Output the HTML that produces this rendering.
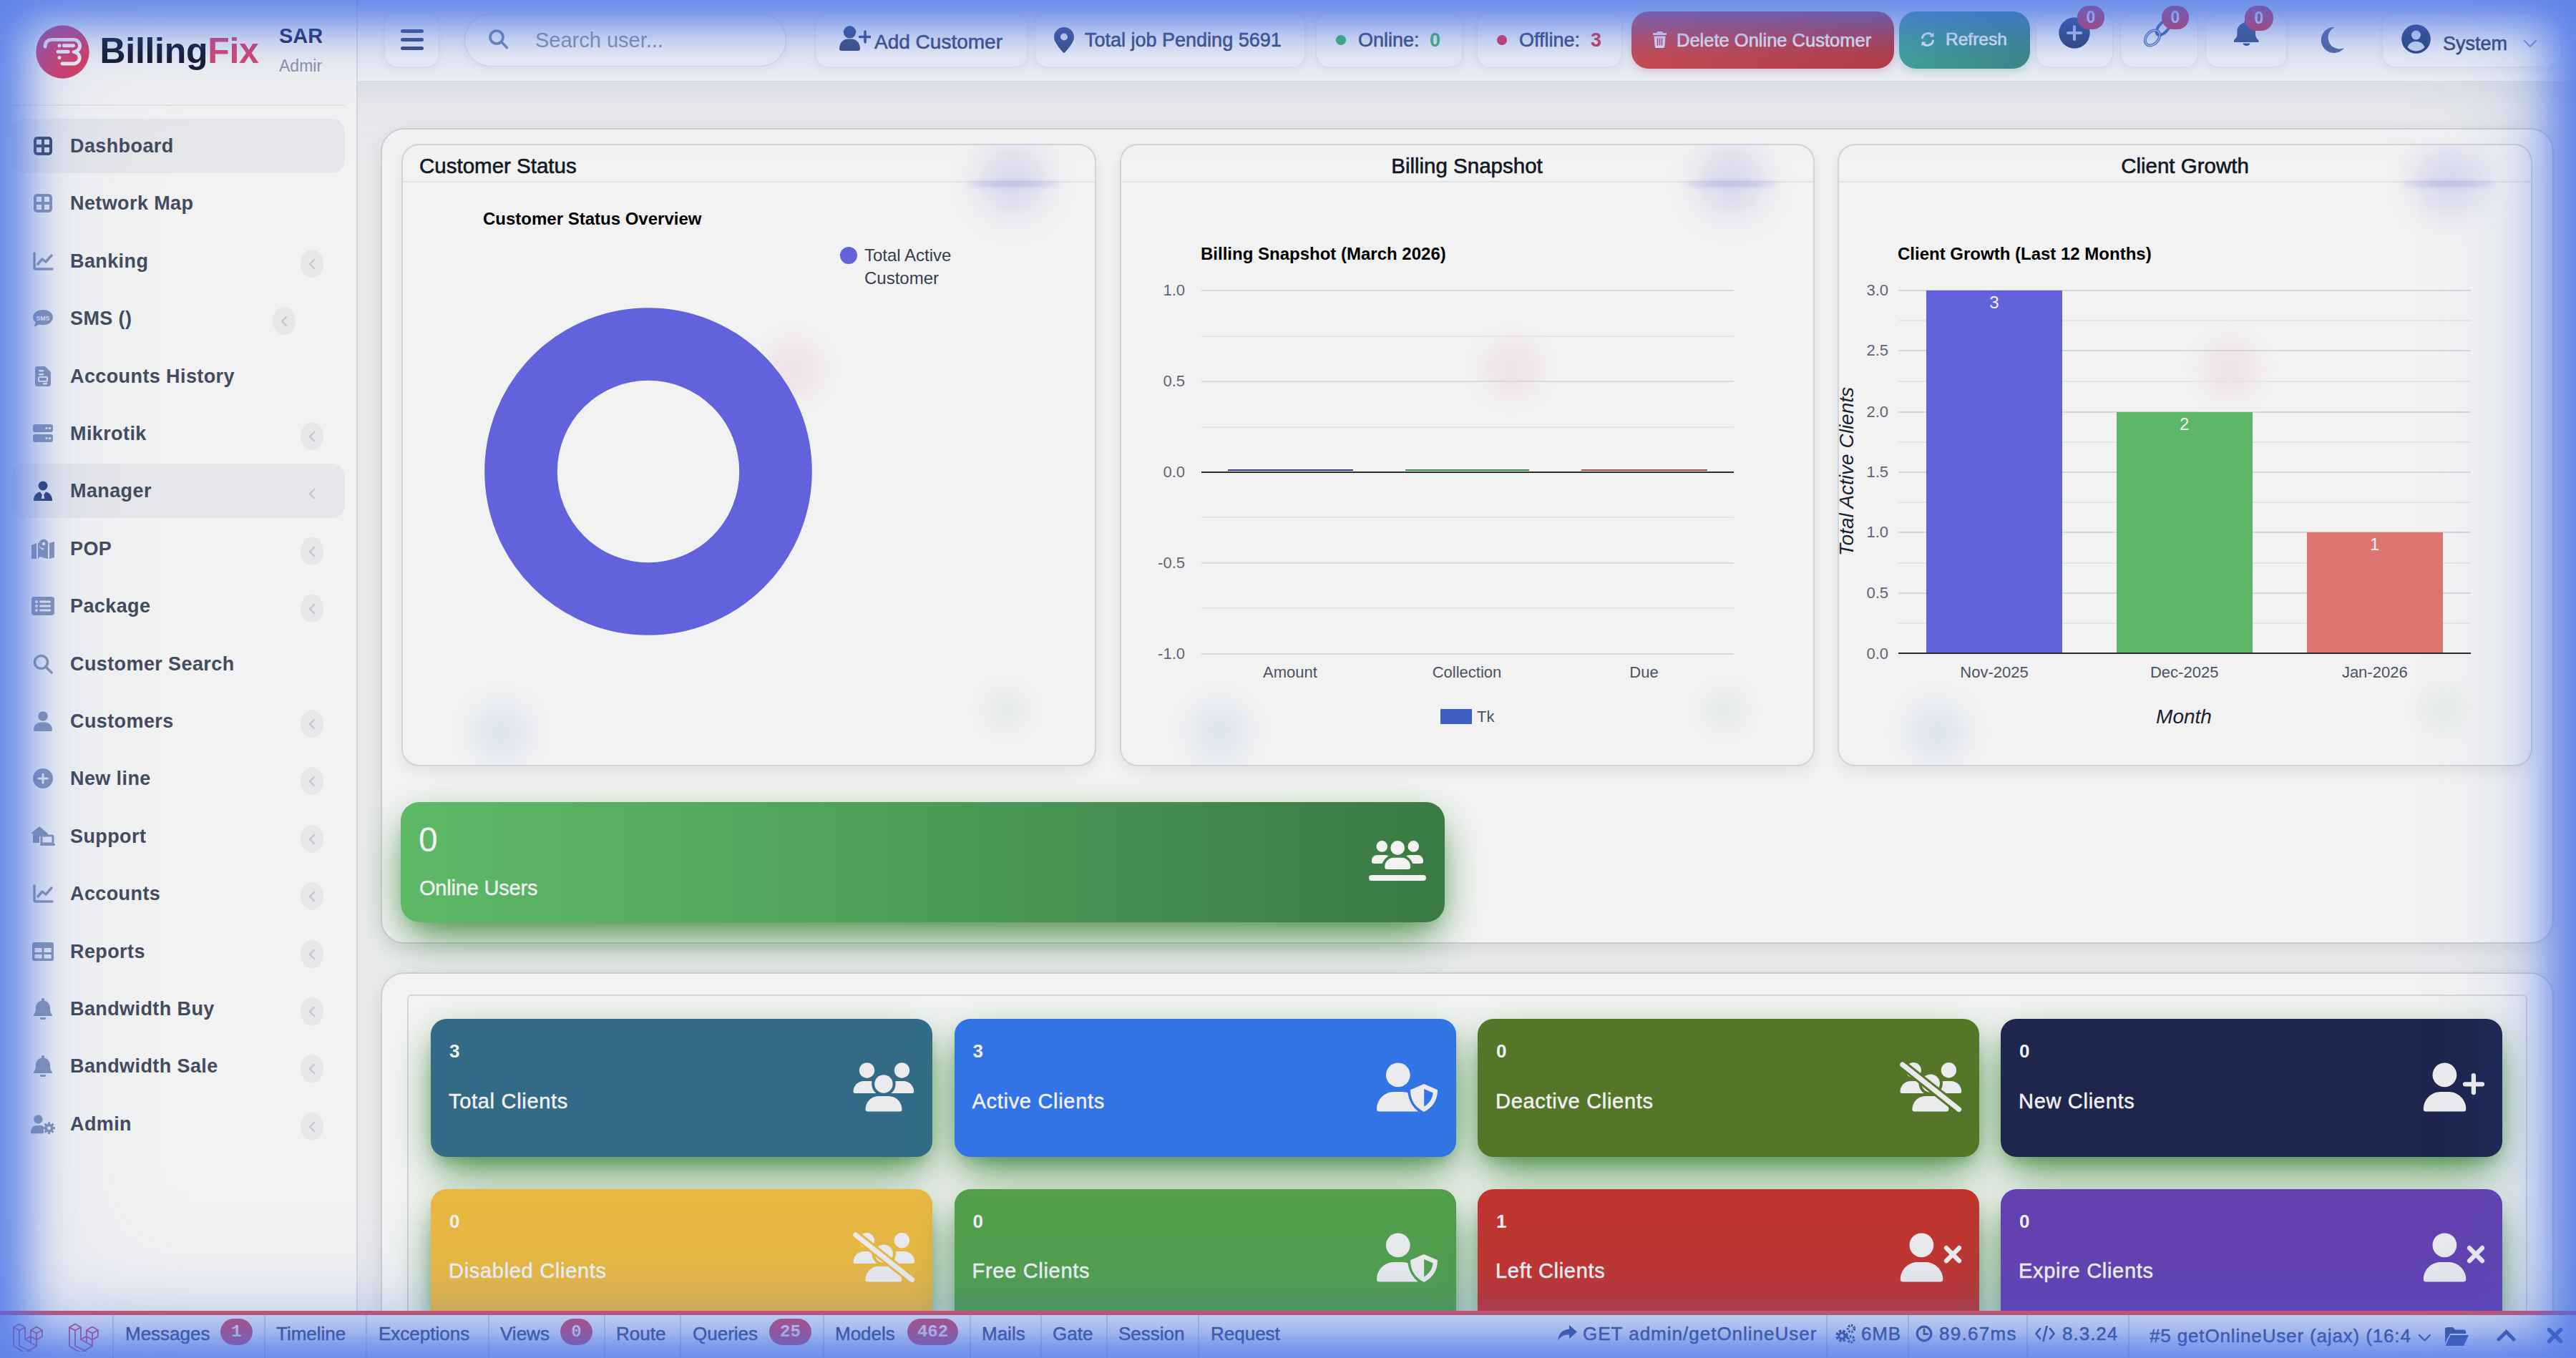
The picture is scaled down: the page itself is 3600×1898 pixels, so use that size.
<!DOCTYPE html>
<html><head><meta charset="utf-8">
<style>
*{box-sizing:border-box;margin:0;padding:0}
html,body{width:3600px;height:1898px;overflow:hidden;background:#e8e9eb;font-family:"Liberation Sans",sans-serif;position:relative}
.a{position:absolute;white-space:nowrap}
#sidebar{position:absolute;left:0;top:0;width:500px;height:1898px;background:#f2f2f2;border-right:2px solid #d6d9df;overflow:hidden}
#logo-sep{position:absolute;left:16px;top:146px;width:466px;height:2px;background:#e3e4e7}
.mi{position:absolute;left:16px;width:466px;height:76px;border-radius:18px}
.mi.act{background:#e6e7ea}
.mi .ic{position:absolute;left:27px;top:0;width:34px;height:76px;display:flex;align-items:center;justify-content:center}
.mi .tx{position:absolute;left:82px;top:0;line-height:76px;font-size:27px;font-weight:700;color:#434c5e;letter-spacing:0.4px;white-space:nowrap}
.mi .chev{position:absolute;top:22px;width:32px;height:39px;border-radius:50%;background:#e7e7e9}
.mi .chev.noc{background:transparent}
.mi .chev svg{position:absolute;left:10px;top:12px}
#topbar{position:absolute;left:500px;top:0;width:3100px;height:113px;background:#eff0f3;border-bottom:2px solid #f3f4f6}
#tshadow{position:absolute;left:500px;top:113px;width:3100px;height:40px;background:linear-gradient(#dfe0e4,rgba(232,233,235,0))}
.tb{position:absolute;top:17px;height:77px;border-radius:18px;background:rgba(255,255,255,0.16);border:1.5px solid rgba(190,198,222,0.35);box-shadow:0 4px 10px rgba(40,60,120,0.06)}
.tt{position:absolute;white-space:nowrap;color:#3f4d7c;font-size:27px;line-height:40px;height:40px;-webkit-text-stroke:0.6px currentColor}
.card-outer{position:absolute;border:2px solid #cacdd4;border-radius:33px;background:#f2f2f2;box-shadow:0 6px 26px rgba(0,0,0,0.08)}
.chart{position:absolute;top:201px;width:971px;height:870px;border:2px solid #d1d4db;border-radius:25px;background:#f2f2f2;overflow:hidden;box-shadow:0 8px 22px rgba(0,0,0,0.07)}
.chart .hd{position:absolute;left:0;top:50px;width:100%;height:2px;background:#e1e2e6}
.chart .ttl{position:absolute;top:0;height:50px;line-height:44px;font-size:29.5px;color:#111827;white-space:nowrap;-webkit-text-stroke:0.6px currentColor}
.blob{position:absolute;border-radius:50%;filter:blur(14px)}
.ct{position:absolute;white-space:nowrap;font-size:24px;font-weight:700;color:#000;line-height:30px;height:30px}
.ax{position:absolute;white-space:nowrap;font-size:23px;color:#4b5263;line-height:30px;height:30px}
.gl{position:absolute;height:2px;background:#dcdde1}
.stat{position:absolute;width:701px;height:193px;border-radius:22px;box-shadow:0 24px 60px -10px rgba(60,135,60,1),0 12px 20px -8px rgba(60,130,60,0.4)}
.stat .n{position:absolute;left:26px;top:30px;font-size:26px;line-height:30px;font-weight:700;color:#f1f1f3}
.stat .l{position:absolute;left:25px;top:94.5px;font-size:29px;line-height:40px;color:#f1f1f3;white-space:nowrap;letter-spacing:0.7px;-webkit-text-stroke:0.5px currentColor}
.stat svg{position:absolute}
#debugbar{position:absolute;left:0;top:1832px;width:3600px;height:66px;background:#f1f2f5;border-top:6px solid #d9505f}
.db{position:absolute;top:0;line-height:60px;font-size:26px;color:#3e4a7a;white-space:nowrap;-webkit-text-stroke:0.5px currentColor}
.dsep{position:absolute;top:0;width:2px;height:60px;background:rgba(160,175,215,0.45)}
.badge{position:absolute;top:5px;height:37px;border-radius:19px;background:#cf4a66;color:#f4e3ec;font-size:24px;font-weight:700;line-height:37px;text-align:center}
.vg{position:absolute;pointer-events:none}
</style></head>
<body>
<div class="card-outer" style="left:532px;top:179px;width:3037px;height:1140px"></div>
<div class="chart" style="left:561px"><div class="hd"></div><div class="ttl" style="top:6.5px;left:23px">Customer Status</div><div class="blob" style="left:804px;top:2px;width:96px;height:96px;filter:blur(20px);background:rgba(130,130,225,0.22)"></div><div class="blob" style="left:787px;top:52px;width:130px;height:5px;filter:blur(3px);background:rgba(120,120,225,0.4)"></div><div class="blob" style="left:506px;top:272px;width:80px;height:80px;background:rgba(230,160,190,0.18)"></div><div class="blob" style="left:97px;top:780px;width:80px;height:80px;filter:blur(18px);background:rgba(170,195,230,0.28)"></div><div class="blob" style="left:813px;top:758px;width:60px;height:60px;background:rgba(185,210,190,0.2)"></div></div>
<div class="chart" style="left:1564.5px"><div class="hd"></div><div class="ttl" style="top:6.5px;left:0;width:100%;text-align:center">Billing Snapshot</div><div class="blob" style="left:804px;top:2px;width:96px;height:96px;filter:blur(20px);background:rgba(130,130,225,0.22)"></div><div class="blob" style="left:787px;top:52px;width:130px;height:5px;filter:blur(3px);background:rgba(120,120,225,0.4)"></div><div class="blob" style="left:506px;top:272px;width:80px;height:80px;background:rgba(230,160,190,0.18)"></div><div class="blob" style="left:97px;top:780px;width:80px;height:80px;filter:blur(18px);background:rgba(170,195,230,0.28)"></div><div class="blob" style="left:813px;top:758px;width:60px;height:60px;background:rgba(185,210,190,0.2)"></div></div>
<div class="chart" style="left:2568px"><div class="hd"></div><div class="ttl" style="top:6.5px;left:0;width:100%;text-align:center">Client Growth</div><div class="blob" style="left:804px;top:2px;width:96px;height:96px;filter:blur(20px);background:rgba(130,130,225,0.22)"></div><div class="blob" style="left:787px;top:52px;width:130px;height:5px;filter:blur(3px);background:rgba(120,120,225,0.4)"></div><div class="blob" style="left:506px;top:272px;width:80px;height:80px;background:rgba(230,160,190,0.18)"></div><div class="blob" style="left:97px;top:780px;width:80px;height:80px;filter:blur(18px);background:rgba(170,195,230,0.28)"></div><div class="blob" style="left:813px;top:758px;width:60px;height:60px;background:rgba(185,210,190,0.2)"></div></div>
<div class="ct" style="left:675px;top:290.5px">Customer Status Overview</div>
<svg class="a" style="left:670px;top:423px" width="472" height="472" viewBox="0 0 472 472"><circle cx="236" cy="236" r="178" fill="none" stroke="#6262dc" stroke-width="101.6"/></svg>
<div class="a" style="left:1174px;top:344.5px;width:24px;height:24px;border-radius:50%;background:#6262dc"></div>
<div class="a" style="left:1208px;top:342px;font-size:24px;line-height:30px;color:#373d4f">Total Active</div>
<div class="a" style="left:1208px;top:373.5px;font-size:24px;line-height:30px;color:#373d4f">Customer</div>
<div class="ct" style="left:1678px;top:339.5px">Billing Snapshot (March 2026)</div>
<div class="gl" style="left:1679px;top:405px;width:744px;background:#d9dadf"></div>
<div class="ax" style="left:1556px;width:100px;text-align:right;top:391px;font-size:22px;color:#5f6575">1.0</div>
<div class="gl" style="left:1679px;top:468.5px;width:744px;background:#e3e4e7"></div>
<div class="gl" style="left:1679px;top:532px;width:744px;background:#d9dadf"></div>
<div class="ax" style="left:1556px;width:100px;text-align:right;top:518px;font-size:22px;color:#5f6575">0.5</div>
<div class="gl" style="left:1679px;top:595.5px;width:744px;background:#e3e4e7"></div>
<div class="a" style="left:1679px;top:658.5px;width:744px;height:2px;background:#2b2b2b"></div>
<div class="ax" style="left:1556px;width:100px;text-align:right;top:644.5px;font-size:22px;color:#5f6575">0.0</div>
<div class="gl" style="left:1679px;top:722px;width:744px;background:#e3e4e7"></div>
<div class="gl" style="left:1679px;top:785.5px;width:744px;background:#d9dadf"></div>
<div class="ax" style="left:1556px;width:100px;text-align:right;top:771.5px;font-size:22px;color:#5f6575">-0.5</div>
<div class="gl" style="left:1679px;top:849px;width:744px;background:#e3e4e7"></div>
<div class="gl" style="left:1679px;top:912.5px;width:744px;background:#d9dadf"></div>
<div class="ax" style="left:1556px;width:100px;text-align:right;top:898.5px;font-size:22px;color:#5f6575">-1.0</div>
<div class="a" style="left:1716px;top:656px;width:175px;height:2px;background:#343a8a"></div>
<div class="a" style="left:1964px;top:656px;width:173px;height:2px;background:#3d8a4a"></div>
<div class="a" style="left:2210px;top:656px;width:176px;height:2px;background:#a34f4f"></div>
<div class="ax" style="left:1703px;width:200px;text-align:center;top:925px;font-size:22px">Amount</div>
<div class="ax" style="left:1950px;width:200px;text-align:center;top:925px;font-size:22px">Collection</div>
<div class="ax" style="left:2197.5px;width:200px;text-align:center;top:925px;font-size:22px">Due</div>
<div class="a" style="left:2013px;top:991px;width:44px;height:21px;background:#3e5fc0"></div>
<div class="ax" style="left:2064px;top:987px;font-size:22px">Tk</div>
<div class="ct" style="left:2652px;top:339.5px">Client Growth (Last 12 Months)</div>
<div class="gl" style="left:2653px;top:405px;width:800px;background:#d6d7dd"></div>
<div class="ax" style="left:2539px;width:100px;text-align:right;top:391px;font-size:22px;color:#5f6575">3.0</div>
<div class="gl" style="left:2653px;top:447.2px;width:800px;background:#e3e4e7"></div>
<div class="gl" style="left:2653px;top:489.4px;width:800px;background:#d6d7dd"></div>
<div class="ax" style="left:2539px;width:100px;text-align:right;top:475.4px;font-size:22px;color:#5f6575">2.5</div>
<div class="gl" style="left:2653px;top:531.6px;width:800px;background:#e3e4e7"></div>
<div class="gl" style="left:2653px;top:574.6px;width:800px;background:#d6d7dd"></div>
<div class="ax" style="left:2539px;width:100px;text-align:right;top:560.6px;font-size:22px;color:#5f6575">2.0</div>
<div class="gl" style="left:2653px;top:616.8px;width:800px;background:#e3e4e7"></div>
<div class="gl" style="left:2653px;top:659px;width:800px;background:#d6d7dd"></div>
<div class="ax" style="left:2539px;width:100px;text-align:right;top:645px;font-size:22px;color:#5f6575">1.5</div>
<div class="gl" style="left:2653px;top:701px;width:800px;background:#e3e4e7"></div>
<div class="gl" style="left:2653px;top:743px;width:800px;background:#d6d7dd"></div>
<div class="ax" style="left:2539px;width:100px;text-align:right;top:729px;font-size:22px;color:#5f6575">1.0</div>
<div class="gl" style="left:2653px;top:785.5px;width:800px;background:#e3e4e7"></div>
<div class="gl" style="left:2653px;top:828px;width:800px;background:#d6d7dd"></div>
<div class="ax" style="left:2539px;width:100px;text-align:right;top:814px;font-size:22px;color:#5f6575">0.5</div>
<div class="gl" style="left:2653px;top:870.3px;width:800px;background:#e3e4e7"></div>
<div class="ax" style="left:2539px;width:100px;text-align:right;top:898.5px;font-size:22px;color:#5f6575">0.0</div>
<div class="a" style="left:2692px;top:406px;width:190px;height:507.5px;background:#6262dc"></div>
<div class="ax" style="left:2692px;width:190px;text-align:center;top:408px;font-size:24px;color:#f4f4f6">3</div>
<div class="ax" style="left:2687.0px;width:200px;text-align:center;top:925px;font-size:22px">Nov-2025</div>
<div class="a" style="left:2957.6px;top:575.6px;width:190.2px;height:337.9px;background:#5cb769"></div>
<div class="ax" style="left:2957.6px;width:190.2px;text-align:center;top:577.6px;font-size:24px;color:#f4f4f6">2</div>
<div class="ax" style="left:2952.7px;width:200px;text-align:center;top:925px;font-size:22px">Dec-2025</div>
<div class="a" style="left:3224px;top:744px;width:189.5px;height:169.5px;background:#df7570"></div>
<div class="ax" style="left:3224px;width:189.5px;text-align:center;top:746px;font-size:24px;color:#f4f4f6">1</div>
<div class="ax" style="left:3218.75px;width:200px;text-align:center;top:925px;font-size:22px">Jan-2026</div>
<div class="a" style="left:2653px;top:912px;width:800px;height:2px;background:#2b2b2b"></div>
<div class="a" style="left:2952px;top:985px;width:200px;text-align:center;font-size:28px;line-height:34px;font-style:italic;color:#1c2030">Month</div>
<div class="a" style="left:2481px;top:660px;width:200px;height:34px;text-align:center;font-size:28px;line-height:34px;font-style:italic;color:#1c2030;transform:rotate(-90deg);overflow:visible;white-space:nowrap"><span style="position:relative;left:0">Total Active Clients</span></div>
<div class="a" style="left:560px;top:1121px;width:1459px;height:168px;border-radius:26px;background:linear-gradient(90deg,#5db968 0%,#55a95f 30%,#4a9554 60%,#3a7a44 100%);box-shadow:0 24px 60px -10px rgba(60,135,60,1),0 12px 20px -8px rgba(60,130,60,0.15)"></div>
<div class="a" style="left:585px;top:1144px;font-size:48px;line-height:60px;color:#f1f2f1">0</div>
<div class="a" style="left:586px;top:1220.5px;font-size:29px;line-height:40px;color:#f1f2f1;letter-spacing:-0.2px;-webkit-text-stroke:0.4px currentColor">Online Users</div>
<svg class="a" style="left:1900px;top:1160px" width="110" height="85" viewBox="0 0 110 85"><g fill="#f2f2f2"><circle cx="31.3" cy="22.9" r="7.8"/><circle cx="75.3" cy="22.9" r="7.8"/><path d="M16.9 43c0-4.5 3.5-8 8-8h11c4.5 0 8 3.5 8 8v1a3 3 0 0 1-3 3H19.9a3 3 0 0 1-3-3z"/><path d="M62 43c0-4.5 3.5-8 8-8h11c4.5 0 8 3.5 8 8v1a3 3 0 0 1-3 3H65a3 3 0 0 1-3-3z"/></g><path d="M33 55c0-10 8-18.5 18-18.5h4c10 0 18 8.5 18 18.5" fill="none" stroke="#3f8048" stroke-width="6"/><g fill="#f2f2f2"><circle cx="53.2" cy="25" r="9.9"/><path d="M35.2 51.5c0-7 5.5-12.7 12.5-12.7h11c7 0 12.5 5.7 12.5 12.7a3.6 3.6 0 0 1-3.6 3.6H38.8a3.6 3.6 0 0 1-3.6-3.6z"/><rect x="13" y="63" width="80" height="8" rx="4"/></g></svg>
<div class="card-outer" style="left:532px;top:1359px;width:3037px;height:700px"></div>
<div class="a" style="left:569px;top:1390px;width:2963px;height:700px;border:2px solid #d3d5da;border-radius:6px;background:#f2f2f2"></div>
<div class="stat" style="left:602px;top:1424px;background:#336b87"><div class="n">3</div><div class="l">Total Clients</div><svg style="left:588px;top:56px" width="100" height="90" viewBox="10 10 100 90"><g fill="#ebebed"><circle cx="31.5" cy="26" r="10.7"/><circle cx="80.5" cy="26" r="10.7"/><path d="M12.5 55.5c0-8 6.5-14.6 14.6-14.6h9c8 0 14.6 6.5 14.6 14.6v0a2.5 2.5 0 0 1-2.5 2.5H15a2.5 2.5 0 0 1-2.5-2.5z"/><path d="M59 55.5c0-8 6.5-14.6 14.6-14.6h9c8 0 14.6 6.5 14.6 14.6a2.5 2.5 0 0 1-2.5 2.5H61.5a2.5 2.5 0 0 1-2.5-2.5z"/></g><circle cx="54.9" cy="45" r="16.7" fill="#336b87"/><g fill="#ebebed"><circle cx="54.9" cy="45" r="12.7"/><path d="M29.5 80.5c0-10 8-18.5 18-18.5h14.5c10 0 18.5 8.5 18.5 18.5a3 3 0 0 1-3 3H32.5a3 3 0 0 1-3-3z"/></g></svg></div>
<div class="stat" style="left:1333.5px;top:1424px;background:#3274e6"><div class="n">3</div><div class="l">Active Clients</div><svg style="left:566px;top:46px" width="120" height="100" viewBox="0 0 120 100"><g fill="#ebebed"><circle cx="53.8" cy="32.4" r="16.9"/><path d="M24 80c0-13 10.5-24 24-24h12c13 0 24 11 24 24a3.6 3.6 0 0 1-3.6 3.6H27.6A3.6 3.6 0 0 1 24 80z"/></g><path d="M90 40.5L113 50.5C113 68 105 81 90 88.5 75 81 67 68 67 50.5z" fill="#3274e6"/><path d="M90 45L109 53.2C109 68 102 78 90 84 78 78 71 68 71 53.2z" fill="#ebebed"/><path d="M90.2 52L102.6 57.3C101.8 66 97.5 72 90.2 76.6z" fill="#3274e6"/></svg></div>
<div class="stat" style="left:2065px;top:1424px;background:#557628"><div class="n">0</div><div class="l">Deactive Clients</div><svg style="left:575px;top:46px" width="120" height="100" viewBox="0 0 120 100"><g fill="#ebebed"><circle cx="34.2" cy="25.8" r="10.7"/><circle cx="83.4" cy="25.8" r="10.7"/><path d="M15.5 55.5c0-8 6.5-14.6 14.6-14.6h9c8 0 14.6 6.5 14.6 14.6a2.5 2.5 0 0 1-2.5 2.5H18a2.5 2.5 0 0 1-2.5-2.5z"/><path d="M63 55.5c0-8 6.5-14.6 14.6-14.6h9c8 0 14.6 6.5 14.6 14.6a2.5 2.5 0 0 1-2.5 2.5H65.5a2.5 2.5 0 0 1-2.5-2.5z"/></g><circle cx="58.2" cy="44.2" r="16.7" fill="#557628"/><g fill="#ebebed"><circle cx="58.2" cy="44.2" r="12.7"/><path d="M32.4 80.5c0-10 8-18.5 18-18.5h14.5c10 0 18.5 8.5 18.5 18.5a3 3 0 0 1-3 3H35.4a3 3 0 0 1-3-3z"/></g><path d="M18.8 18L97.6 80.6" stroke="#557628" stroke-width="13" stroke-linecap="round"/><path d="M18.8 18L97.6 80.6" stroke="#ebebed" stroke-width="7" stroke-linecap="round"/></svg></div>
<div class="stat" style="left:2796px;top:1424px;background:#1e264d"><div class="n">0</div><div class="l">New Clients</div><svg style="left:574px;top:46px" width="110" height="100" viewBox="0 0 110 100"><g fill="#ebebed"><circle cx="46.4" cy="32.4" r="16.9"/><path d="M16.8 80c0-13 10.5-24 24-24h11.5c13 0 24 11 24 24a3.6 3.6 0 0 1-3.6 3.6H20.4a3.6 3.6 0 0 1-3.6-3.6z"/></g><path d="M86.9 33.2v23.8M75 45.3h24" stroke="#ebebed" stroke-width="6.3" stroke-linecap="round"/></svg></div>
<div class="stat" style="left:602px;top:1661.6px;background:#e8b842"><div class="n">0</div><div class="l">Disabled Clients</div><svg style="left:575px;top:46px" width="120" height="100" viewBox="0 0 120 100"><g fill="#ebebed"><circle cx="34.2" cy="25.8" r="10.7"/><circle cx="83.4" cy="25.8" r="10.7"/><path d="M15.5 55.5c0-8 6.5-14.6 14.6-14.6h9c8 0 14.6 6.5 14.6 14.6a2.5 2.5 0 0 1-2.5 2.5H18a2.5 2.5 0 0 1-2.5-2.5z"/><path d="M63 55.5c0-8 6.5-14.6 14.6-14.6h9c8 0 14.6 6.5 14.6 14.6a2.5 2.5 0 0 1-2.5 2.5H65.5a2.5 2.5 0 0 1-2.5-2.5z"/></g><circle cx="58.2" cy="44.2" r="16.7" fill="#e8b842"/><g fill="#ebebed"><circle cx="58.2" cy="44.2" r="12.7"/><path d="M32.4 80.5c0-10 8-18.5 18-18.5h14.5c10 0 18.5 8.5 18.5 18.5a3 3 0 0 1-3 3H35.4a3 3 0 0 1-3-3z"/></g><path d="M18.8 18L97.6 80.6" stroke="#e8b842" stroke-width="13" stroke-linecap="round"/><path d="M18.8 18L97.6 80.6" stroke="#ebebed" stroke-width="7" stroke-linecap="round"/></svg></div>
<div class="stat" style="left:1333.5px;top:1661.6px;background:#52a04c"><div class="n">0</div><div class="l">Free Clients</div><svg style="left:566px;top:46px" width="120" height="100" viewBox="0 0 120 100"><g fill="#ebebed"><circle cx="53.8" cy="32.4" r="16.9"/><path d="M24 80c0-13 10.5-24 24-24h12c13 0 24 11 24 24a3.6 3.6 0 0 1-3.6 3.6H27.6A3.6 3.6 0 0 1 24 80z"/></g><path d="M90 40.5L113 50.5C113 68 105 81 90 88.5 75 81 67 68 67 50.5z" fill="#52a04c"/><path d="M90 45L109 53.2C109 68 102 78 90 84 78 78 71 68 71 53.2z" fill="#ebebed"/><path d="M90.2 52L102.6 57.3C101.8 66 97.5 72 90.2 76.6z" fill="#52a04c"/></svg></div>
<div class="stat" style="left:2065px;top:1661.6px;background:#c0352f"><div class="n">1</div><div class="l">Left Clients</div><svg style="left:574px;top:48px" width="110" height="100" viewBox="0 0 110 100"><g fill="#ebebed"><circle cx="46.4" cy="30.3" r="16.9"/><path d="M16.8 78c0-13 10.5-24 24-24h11.5c13 0 24 11 24 24a3.6 3.6 0 0 1-3.6 3.6H20.4a3.6 3.6 0 0 1-3.6-3.6z"/></g><path d="M81 34.2L99 52.3M99 34.2L81 52.3" stroke="#ebebed" stroke-width="6.3" stroke-linecap="round"/></svg></div>
<div class="stat" style="left:2796px;top:1661.6px;background:#6441b0"><div class="n">0</div><div class="l">Expire Clients</div><svg style="left:574px;top:48px" width="110" height="100" viewBox="0 0 110 100"><g fill="#ebebed"><circle cx="46.4" cy="30.3" r="16.9"/><path d="M16.8 78c0-13 10.5-24 24-24h11.5c13 0 24 11 24 24a3.6 3.6 0 0 1-3.6 3.6H20.4a3.6 3.6 0 0 1-3.6-3.6z"/></g><path d="M81 34.2L99 52.3M99 34.2L81 52.3" stroke="#ebebed" stroke-width="6.3" stroke-linecap="round"/></svg></div>

<div id="sidebar">
<svg class="a" style="left:50px;top:35px" width="75" height="75" viewBox="0 0 75 75"><defs><linearGradient id="lg" x1="0" y1="0" x2="1" y2="1"><stop offset="0" stop-color="#c4457c"/><stop offset="1" stop-color="#e23a58"/></linearGradient></defs><circle cx="37.5" cy="37.5" r="37.2" fill="url(#lg)"/><path d="M13.1 30.2C13.1 24 16.5 20.4 23 20.4H53A8.6 8.6 0 0 1 53 37.6A8.2 8.2 0 0 1 53 54H36.9" fill="none" stroke="#f5f0f4" stroke-width="4.9" stroke-linecap="round" stroke-linejoin="round"/><path d="M39.3 28.8H52.6M31 37.2H45.3" stroke="#f5f0f4" stroke-width="4.9" stroke-linecap="round"/><circle cx="33" cy="28.8" r="2.5" fill="#f5f0f4"/><circle cx="33" cy="45.6" r="2.5" fill="#f5f0f4"/></svg>
<div class="a" style="left:139.5px;top:41.4px;font-size:50px;line-height:60px;font-weight:700;letter-spacing:-0.3px;color:#151a2e">Billing<span style="color:#d8456d">Fix</span></div>
<div class="a" style="left:390px;top:30px;width:60px;overflow:hidden;font-size:29px;line-height:40px;font-weight:700;color:#1f2d5c">SARKER</div>
<div class="a" style="left:390px;top:77px;width:60px;overflow:hidden;font-size:23px;line-height:30px;color:#8c95a6">Admin</div>

  <div id="logo-sep"></div>
<div class="mi act" style="top:166.0px"><div class="ic"><svg width="26" height="26" viewBox="0 0 26 26"><rect x="2" y="2" width="22" height="22" rx="3" fill="none" stroke="#3f4b67" stroke-width="4"/><path d="M13 2V24M2 13H24" stroke="#3f4b67" stroke-width="4"/></svg></div><div class="tx">Dashboard</div></div>
<div class="mi " style="top:246.4px"><div class="ic"><svg width="26" height="26" viewBox="0 0 26 26"><rect x="2" y="2" width="22" height="22" rx="3" fill="none" stroke="#8a95b0" stroke-width="4"/><path d="M13 2V24M2 13H24" stroke="#8a95b0" stroke-width="4"/></svg></div><div class="tx">Network Map</div></div>
<div class="mi " style="top:326.8px"><div class="ic"><svg width="30" height="26" viewBox="0 0 30 26"><path d="M3 2V22a2 2 0 0 0 2 2H28" fill="none" stroke="#8a95b0" stroke-width="3.5" stroke-linecap="round"/><path d="M8 17L14 10L19 14L27 5" fill="none" stroke="#8a95b0" stroke-width="3.5" stroke-linecap="round" stroke-linejoin="round"/></svg></div><div class="tx">Banking</div><div class="chev" style="left:404px"><svg width="12" height="16" viewBox="0 0 12 16"><path d="M9 2L3 8l6 6" fill="none" stroke="#c3c6cd" stroke-width="2.2" stroke-linecap="round" stroke-linejoin="round"/></svg></div></div>
<div class="mi " style="top:407.2px"><div class="ic"><svg width="30" height="26" viewBox="0 0 30 26"><path d="M15 1C7 1 1 5.8 1 11.5c0 2.8 1.4 5.2 3.6 7.1L2.5 25 9.5 21.5c1.7.5 3.5.8 5.5.8 8 0 14-4.8 14-10.8S23 1 15 1z" fill="#8a95b0"/><text x="15" y="15.5" font-size="8.5" font-weight="700" text-anchor="middle" fill="#f2f2f2" font-family="Liberation Sans">SMS</text></svg></div><div class="tx">SMS ()</div><div class="chev" style="left:365px"><svg width="12" height="16" viewBox="0 0 12 16"><path d="M9 2L3 8l6 6" fill="none" stroke="#c3c6cd" stroke-width="2.2" stroke-linecap="round" stroke-linejoin="round"/></svg></div></div>
<div class="mi " style="top:487.6px"><div class="ic"><svg width="22" height="28" viewBox="0 0 22 28"><path d="M3 0h11l8 8v17a3 3 0 0 1-3 3H3a3 3 0 0 1-3-3V3a3 3 0 0 1 3-3z" fill="#8a95b0"/><rect x="5" y="5" width="7" height="2.5" rx="1" fill="#f2f2f2"/><rect x="5" y="10" width="7" height="2.5" rx="1" fill="#f2f2f2"/><rect x="5" y="15" width="12" height="6" rx="1.5" fill="none" stroke="#f2f2f2" stroke-width="2"/><rect x="11" y="23" width="6" height="2.5" rx="1" fill="#f2f2f2"/></svg></div><div class="tx">Accounts History</div></div>
<div class="mi " style="top:568.0px"><div class="ic"><svg width="28" height="26" viewBox="0 0 28 26"><rect x="0" y="0" width="28" height="11" rx="3" fill="#8a95b0"/><rect x="0" y="14" width="28" height="11" rx="3" fill="#8a95b0"/><circle cx="19" cy="5.5" r="1.6" fill="#f2f2f2"/><circle cx="23.5" cy="5.5" r="1.6" fill="#f2f2f2"/><circle cx="19" cy="19.5" r="1.6" fill="#f2f2f2"/><circle cx="23.5" cy="19.5" r="1.6" fill="#f2f2f2"/></svg></div><div class="tx">Mikrotik</div><div class="chev" style="left:404px"><svg width="12" height="16" viewBox="0 0 12 16"><path d="M9 2L3 8l6 6" fill="none" stroke="#c3c6cd" stroke-width="2.2" stroke-linecap="round" stroke-linejoin="round"/></svg></div></div>
<div class="mi act" style="top:648.4px"><div class="ic"><svg width="26" height="28" viewBox="0 0 26 28"><circle cx="13" cy="7" r="6.5" fill="#2f3f72"/><path d="M0 27c0-6 4-11 9-11.5L13 21l4-5.5c5 .5 9 5.5 9 11.5v1H0z" fill="#2f3f72"/><path d="M11.5 16h3l-0.5 2 1.3 7h-4.6l1.3-7z" fill="#e7e8eb"/></svg></div><div class="tx">Manager</div><div class="chev noc" style="left:404px"><svg width="12" height="16" viewBox="0 0 12 16"><path d="M9 2L3 8l6 6" fill="none" stroke="#c3c6cd" stroke-width="2.2" stroke-linecap="round" stroke-linejoin="round"/></svg></div></div>
<div class="mi " style="top:728.8px"><div class="ic"><svg width="32" height="28" viewBox="0 0 32 28"><path d="M0 9l7-3v22l-7 0zM25 6l7-2v22l-7 2z" fill="#8a95b0"/><path d="M9 6l2 0v20l-2 2zM16 14l-5 0 0 0M23 8v20l-12-3V12l5 4z" fill="#8a95b0"/><circle cx="17" cy="7" r="6.5" fill="#8a95b0"/><circle cx="17" cy="7" r="2.3" fill="#f2f2f2"/></svg></div><div class="tx">POP</div><div class="chev" style="left:404px"><svg width="12" height="16" viewBox="0 0 12 16"><path d="M9 2L3 8l6 6" fill="none" stroke="#c3c6cd" stroke-width="2.2" stroke-linecap="round" stroke-linejoin="round"/></svg></div></div>
<div class="mi " style="top:809.2px"><div class="ic"><svg width="32" height="26" viewBox="0 0 32 26"><rect x="0" y="0" width="32" height="26" rx="4" fill="#8a95b0"/><circle cx="7" cy="7" r="2" fill="#f2f2f2"/><circle cx="7" cy="13" r="2" fill="#f2f2f2"/><circle cx="7" cy="19" r="2" fill="#f2f2f2"/><rect x="11" y="5.5" width="16" height="3" rx="1.5" fill="#f2f2f2"/><rect x="11" y="11.5" width="16" height="3" rx="1.5" fill="#f2f2f2"/><rect x="11" y="17.5" width="16" height="3" rx="1.5" fill="#f2f2f2"/></svg></div><div class="tx">Package</div><div class="chev" style="left:404px"><svg width="12" height="16" viewBox="0 0 12 16"><path d="M9 2L3 8l6 6" fill="none" stroke="#c3c6cd" stroke-width="2.2" stroke-linecap="round" stroke-linejoin="round"/></svg></div></div>
<div class="mi " style="top:889.6px"><div class="ic"><svg width="28" height="28" viewBox="0 0 28 28"><circle cx="11.5" cy="11.5" r="9" fill="none" stroke="#8a95b0" stroke-width="3.5"/><path d="M18.5 18.5L26 26" stroke="#8a95b0" stroke-width="3.5" stroke-linecap="round"/></svg></div><div class="tx">Customer Search</div></div>
<div class="mi " style="top:970.0px"><div class="ic"><svg width="26" height="28" viewBox="0 0 26 28"><circle cx="13" cy="7" r="6.8" fill="#8a95b0"/><path d="M0 26c0-6 4.5-10.5 10-10.5h6c5.5 0 10 4.5 10 10.5a2 2 0 0 1-2 2H2a2 2 0 0 1-2-2z" fill="#8a95b0"/></svg></div><div class="tx">Customers</div><div class="chev" style="left:404px"><svg width="12" height="16" viewBox="0 0 12 16"><path d="M9 2L3 8l6 6" fill="none" stroke="#c3c6cd" stroke-width="2.2" stroke-linecap="round" stroke-linejoin="round"/></svg></div></div>
<div class="mi " style="top:1050.4px"><div class="ic"><svg width="28" height="28" viewBox="0 0 28 28"><circle cx="14" cy="14" r="14" fill="#8a95b0"/><path d="M14 8v12M8 14h12" stroke="#f2f2f2" stroke-width="3" stroke-linecap="round"/></svg></div><div class="tx">New line</div><div class="chev" style="left:404px"><svg width="12" height="16" viewBox="0 0 12 16"><path d="M9 2L3 8l6 6" fill="none" stroke="#c3c6cd" stroke-width="2.2" stroke-linecap="round" stroke-linejoin="round"/></svg></div></div>
<div class="mi " style="top:1130.8px"><div class="ic"><svg width="34" height="28" viewBox="0 0 34 28"><path d="M12 0L0 10h3v13h9V14h12V10z" fill="#8a95b0"/><rect x="15" y="13" width="16" height="11" rx="1.5" fill="none" stroke="#8a95b0" stroke-width="3"/><rect x="13" y="24" width="21" height="3" rx="1" fill="#8a95b0"/></svg></div><div class="tx">Support</div><div class="chev" style="left:404px"><svg width="12" height="16" viewBox="0 0 12 16"><path d="M9 2L3 8l6 6" fill="none" stroke="#c3c6cd" stroke-width="2.2" stroke-linecap="round" stroke-linejoin="round"/></svg></div></div>
<div class="mi " style="top:1211.2px"><div class="ic"><svg width="30" height="26" viewBox="0 0 30 26"><path d="M3 2V22a2 2 0 0 0 2 2H28" fill="none" stroke="#8a95b0" stroke-width="3.5" stroke-linecap="round"/><path d="M8 17L14 10L19 14L27 5" fill="none" stroke="#8a95b0" stroke-width="3.5" stroke-linecap="round" stroke-linejoin="round"/></svg></div><div class="tx">Accounts</div><div class="chev" style="left:404px"><svg width="12" height="16" viewBox="0 0 12 16"><path d="M9 2L3 8l6 6" fill="none" stroke="#c3c6cd" stroke-width="2.2" stroke-linecap="round" stroke-linejoin="round"/></svg></div></div>
<div class="mi " style="top:1291.6px"><div class="ic"><svg width="30" height="26" viewBox="0 0 30 26"><rect x="0" y="0" width="30" height="26" rx="3" fill="#8a95b0"/><rect x="3.5" y="8" width="10" height="6" fill="#f2f2f2"/><rect x="16.5" y="8" width="10" height="6" fill="#f2f2f2"/><rect x="3.5" y="17" width="10" height="5.5" fill="#f2f2f2"/><rect x="16.5" y="17" width="10" height="5.5" fill="#f2f2f2"/></svg></div><div class="tx">Reports</div><div class="chev" style="left:404px"><svg width="12" height="16" viewBox="0 0 12 16"><path d="M9 2L3 8l6 6" fill="none" stroke="#c3c6cd" stroke-width="2.2" stroke-linecap="round" stroke-linejoin="round"/></svg></div></div>
<div class="mi " style="top:1372.0px"><div class="ic"><svg width="26" height="30" viewBox="0 0 26 30"><path d="M13 0a2 2 0 0 1 2 2v1.5c4.5 1 8 5 8 10v2.5c0 3 1 5.5 3 7.5v1.5H0V23c2-2 3-4.5 3-7.5V13.5c0-5 3.5-9 8-10V2a2 2 0 0 1 2-2z" fill="#8a95b0"/><path d="M9 27h8a4 4 0 0 1-8 0z" fill="#8a95b0"/></svg></div><div class="tx">Bandwidth Buy</div><div class="chev" style="left:404px"><svg width="12" height="16" viewBox="0 0 12 16"><path d="M9 2L3 8l6 6" fill="none" stroke="#c3c6cd" stroke-width="2.2" stroke-linecap="round" stroke-linejoin="round"/></svg></div></div>
<div class="mi " style="top:1452.4px"><div class="ic"><svg width="26" height="30" viewBox="0 0 26 30"><path d="M13 0a2 2 0 0 1 2 2v1.5c4.5 1 8 5 8 10v2.5c0 3 1 5.5 3 7.5v1.5H0V23c2-2 3-4.5 3-7.5V13.5c0-5 3.5-9 8-10V2a2 2 0 0 1 2-2z" fill="#8a95b0"/><path d="M9 27h8a4 4 0 0 1-8 0z" fill="#8a95b0"/></svg></div><div class="tx">Bandwidth Sale</div><div class="chev" style="left:404px"><svg width="12" height="16" viewBox="0 0 12 16"><path d="M9 2L3 8l6 6" fill="none" stroke="#c3c6cd" stroke-width="2.2" stroke-linecap="round" stroke-linejoin="round"/></svg></div></div>
<div class="mi " style="top:1532.8px"><div class="ic"><svg width="36" height="28" viewBox="0 0 36 28"><circle cx="11" cy="7" r="6.5" fill="#8a95b0"/><path d="M0 26c0-6 4-10 9-10h5c2 0 3.5.5 5 1.5v10.5H2a2 2 0 0 1-2-2z" fill="#8a95b0"/><circle cx="27" cy="20" r="6.5" fill="#8a95b0"/><path d="M27 11v18M18 20h18M20.6 13.6l12.8 12.8M33.4 13.6L20.6 26.4" stroke="#8a95b0" stroke-width="3.2"/><circle cx="27" cy="20" r="2.6" fill="#f2f2f2"/></svg></div><div class="tx">Admin</div><div class="chev" style="left:404px"><svg width="12" height="16" viewBox="0 0 12 16"><path d="M9 2L3 8l6 6" fill="none" stroke="#c3c6cd" stroke-width="2.2" stroke-linecap="round" stroke-linejoin="round"/></svg></div></div>

</div>
<div id="topbar"></div>
<div id="tshadow"></div>
<div class="tb" style="left:537px;width:77px"></div>
<div class="a" style="left:560px;top:41px;width:32px;height:4.5px;border-radius:3px;background:#3e4d80"></div>
<div class="a" style="left:560px;top:53px;width:32px;height:4.5px;border-radius:3px;background:#3e4d80"></div>
<div class="a" style="left:560px;top:65px;width:32px;height:4.5px;border-radius:3px;background:#3e4d80"></div>
<div class="tb" style="left:649px;top:19px;width:450px;height:74px;border-radius:37px;border-color:rgba(170,182,220,0.45)"></div>
<svg class="a" style="left:682px;top:40px" width="30" height="30" viewBox="0 0 30 30"><circle cx="12" cy="12" r="9" fill="none" stroke="#7586b0" stroke-width="3.6"/><path d="M19 19l7.5 7.5" stroke="#7586b0" stroke-width="3.6" stroke-linecap="round"/></svg>
<div class="tt" style="left:748px;top:35.5px;font-size:29px;color:#8a92ac;-webkit-text-stroke:0">Search user...</div>
<div class="tb" style="left:1139px;top:18px;width:297px;height:76px"></div>
<svg class="a" style="left:1173px;top:36px" width="44" height="36" viewBox="0 0 44 36"><circle cx="14.5" cy="8.8" r="8.7" fill="#3e4f85"/><path d="M0 32c0-8 5.5-13.5 12-13.5h5c6.5 0 12 5.5 12 13.5a3 3 0 0 1-3 3H3a3 3 0 0 1-3-3z" fill="#3f4f7c"/><path d="M36 8v15M28.5 15.5h15" stroke="#3e4f85" stroke-width="3.6" stroke-linecap="round"/></svg>
<div class="tt" style="left:1222px;top:38.5px;font-size:28px">Add Customer</div>
<div class="tb" style="left:1446px;width:378px"></div>
<svg class="a" style="left:1473px;top:38px" width="28" height="36" viewBox="0 0 28 36"><path d="M14 0C6.3 0 0 6.2 0 13.8 0 22 10 32 12.5 35a2 2 0 0 0 3 0C18 32 28 22 28 13.8 28 6.2 21.7 0 14 0z" fill="#3f5083"/><circle cx="14" cy="13.5" r="5" fill="#e4e7f0"/></svg>
<div class="tt" style="left:1516px;top:36px">Total job Pending 5691</div>
<div class="tb" style="left:1839px;width:205px"></div>
<div class="a" style="left:1867px;top:48.5px;width:14px;height:14px;border-radius:50%;background:#3db866"></div>
<div class="tt" style="left:1898px;top:36px">Online:</div>
<div class="tt" style="left:1998px;top:36px;color:#3db866;font-weight:700;-webkit-text-stroke:0">0</div>
<div class="tb" style="left:2064px;width:203px"></div>
<div class="a" style="left:2092px;top:48.5px;width:14px;height:14px;border-radius:50%;background:#d83a55"></div>
<div class="tt" style="left:2123px;top:36px">Offline:</div>
<div class="tt" style="left:2223px;top:36px;color:#dc3545;font-weight:700;-webkit-text-stroke:0">3</div>
<div class="a" style="left:2280px;top:16px;width:367px;height:80px;border-radius:24px;background:linear-gradient(100deg,#cf4a4c,#bb3a3e);box-shadow:0 4px 12px rgba(200,50,70,0.2)"></div>
<svg class="a" style="left:2310px;top:44px" width="19" height="23" viewBox="0 0 19 23"><path d="M6 0h7l1 2h5v3H0V2h5z" fill="#f3e6ee"/><path d="M1.5 6.5h16l-1.2 14.5a2 2 0 0 1-2 2H4.7a2 2 0 0 1-2-2z" fill="#f3e6ee"/><path d="M6.5 9.5v10M9.5 9.5v10M12.5 9.5v10" stroke="#c84a60" stroke-width="1.6"/></svg>
<div class="tt" style="left:2343px;top:35.5px;font-size:25.5px;color:#f3ecf3">Delete Online Customer</div>
<div class="a" style="left:2654px;top:16px;width:183px;height:80px;border-radius:24px;background:linear-gradient(100deg,#46a497,#3a8983);box-shadow:0 4px 12px rgba(40,150,140,0.25)"></div>
<svg class="a" style="left:2683px;top:44px" width="22" height="22" viewBox="0 0 22 22"><path d="M3.5 9a8 8 0 0 1 14-3.5M18.5 13a8 8 0 0 1-14 3.5" fill="none" stroke="#e8f0f4" stroke-width="3" stroke-linecap="round"/><path d="M19.5 1.5v6h-6zM2.5 20.5v-6h6z" fill="#e8f0f4"/></svg>
<div class="tt" style="left:2719px;top:35px;font-size:24.5px;color:#eef3f6">Refresh</div>
<div class="tb" style="left:2845px;top:18px;width:108px;height:76px"></div>
<svg class="a" style="left:2877px;top:24px" width="44" height="44" viewBox="0 0 44 44"><circle cx="22" cy="22" r="21.7" fill="#2f4676"/><path d="M22 13v18M13 22h18" stroke="#b9c6ee" stroke-width="4.2" stroke-linecap="round"/></svg>
<div class="a" style="left:2903px;top:8px;width:38px;height:33px;border-radius:16px;background:#dc3545;color:#f0f0ff;font-size:23px;font-weight:700;line-height:33px;text-align:center">0</div>
<div class="tb" style="left:2963px;top:18px;width:109px;height:76px"></div>
<svg class="a" style="left:2994px;top:22px" width="46" height="46" viewBox="0 0 46 46"><ellipse cx="14" cy="31" rx="8.5" ry="12" transform="rotate(42 14 31)" fill="none" stroke="#5f7ab8" stroke-width="4"/><ellipse cx="29" cy="17" rx="6.5" ry="12" transform="rotate(42 29 17)" fill="none" stroke="#4d67a8" stroke-width="4"/><ellipse cx="14" cy="31" rx="8.5" ry="12" transform="rotate(42 14 31)" fill="none" stroke="#c9d6f5" stroke-width="1.2"/></svg>
<div class="a" style="left:3021px;top:8px;width:38px;height:33px;border-radius:16px;background:#dc3545;color:#f0f0ff;font-size:23px;font-weight:700;line-height:33px;text-align:center">0</div>
<div class="tb" style="left:3082px;top:18px;width:114px;height:76px"></div>
<svg class="a" style="left:3122px;top:27px" width="35" height="37" viewBox="0 0 35 37"><path d="M17.5 0c2 0 3 1.5 3 3v1.5c6 1.5 9.5 7 9.5 12.5v4c0 3 1.5 6 4.5 8.5v2.5H0V29c3-2.5 4.5-5.5 4.5-8.5v-4C4.5 11 8.5 6 14.5 4.5V3c0-1.5 1-3 3-3z" fill="#3e5389"/><path d="M12.5 33.5h10a5 3.5 0 0 1-10 0z" fill="#3e5389"/></svg>
<div class="a" style="left:3137px;top:8px;width:40px;height:35px;border-radius:17px;background:#dc3545;color:#f0f0ff;font-size:23px;font-weight:700;line-height:35px;text-align:center">0</div>
<svg class="a" style="left:3243px;top:37px" width="34" height="38" viewBox="0 0 34 38"><path d="M20 1A18 18 0 1 0 33 30 14.5 14.5 0 0 1 20 1z" fill="#56699e"/></svg>
<div class="tb" style="left:3329px;top:18px;width:250px;height:76px"></div>
<svg class="a" style="left:3356px;top:33.5px" width="41" height="41" viewBox="0 0 41 41"><circle cx="20.5" cy="20.5" r="20.3" fill="#2f4478"/><circle cx="20.5" cy="15" r="6.5" fill="#d2dbf2"/><path d="M8.5 32c2-5.5 6.5-8 12-8s10 2.5 12 8a16 16 0 0 1-24 0z" fill="#d2dbf2"/></svg>
<div class="tt" style="left:3414px;top:41px;font-size:27px;color:#3a4670">System</div>
<svg class="a" style="left:3526px;top:55px" width="20" height="12" viewBox="0 0 20 12"><path d="M2 2l8 8 8-8" fill="none" stroke="#8d9ed0" stroke-width="2.4" stroke-linecap="round" stroke-linejoin="round"/></svg>

<div id="debugbar">
<svg class="a" style="left:17px;top:11px" width="44" height="40" viewBox="0 0 44 40"><path d="M2 6l8-4.5 8 4.5v17l8-4.5V10l8-4.5 8 4.5v9l-8 4.5v9l-16 9-16-9z M2 6l8 4.5 8-4.5 M10 10.5V32l16 8 M18 23l16 9 M26 10l8 4.5 8-4.5 M34 14.5v9 M26 19l8 4.5 M26 28.5V19" fill="none" stroke="#cc4a6c" stroke-width="1.8" stroke-linejoin="round"/></svg>
<svg class="a" style="left:95px;top:11px" width="44" height="40" viewBox="0 0 44 40"><path d="M2 6l8-4.5 8 4.5v17l8-4.5V10l8-4.5 8 4.5v9l-8 4.5v9l-16 9-16-9z M2 6l8 4.5 8-4.5 M10 10.5V32l16 8 M18 23l16 9 M26 10l8 4.5 8-4.5 M34 14.5v9 M26 19l8 4.5 M26 28.5V19" fill="none" stroke="#cc4a6c" stroke-width="1.8" stroke-linejoin="round"/></svg>
<div class="dsep" style="left:157px"></div>
<div class="db" style="left:175px;top:-4px;">Messages</div>
<div class="badge" style="left:308px;width:45px;font-family:'Liberation Mono',monospace">1</div>
<div class="dsep" style="left:369px"></div>
<div class="db" style="left:386px;top:-4px;">Timeline</div>
<div class="dsep" style="left:511px"></div>
<div class="db" style="left:529px;top:-4px;">Exceptions</div>
<div class="dsep" style="left:682px"></div>
<div class="db" style="left:699px;top:-4px;">Views</div>
<div class="badge" style="left:783px;width:45px;font-family:'Liberation Mono',monospace">0</div>
<div class="dsep" style="left:844px"></div>
<div class="db" style="left:861px;top:-4px;">Route</div>
<div class="dsep" style="left:950px"></div>
<div class="db" style="left:968px;top:-4px;">Queries</div>
<div class="badge" style="left:1075px;width:59px;font-family:'Liberation Mono',monospace">25</div>
<div class="dsep" style="left:1149.5px"></div>
<div class="db" style="left:1167px;top:-4px;">Models</div>
<div class="badge" style="left:1268px;width:71px;font-family:'Liberation Mono',monospace">462</div>
<div class="dsep" style="left:1355px"></div>
<div class="db" style="left:1372px;top:-4px;">Mails</div>
<div class="dsep" style="left:1454px"></div>
<div class="db" style="left:1471px;top:-4px;">Gate</div>
<div class="dsep" style="left:1546px"></div>
<div class="db" style="left:1563px;top:-4px;">Session</div>
<div class="dsep" style="left:1674px"></div>
<div class="db" style="left:1692px;top:-4px;">Request</div>
<svg class="a" style="left:2177px;top:14px" width="27" height="24" viewBox="0 0 27 24"><path d="M16 0l11 9.5L16 19v-5.5C8 13.5 3.5 16 0 22 1 13 5.5 6.5 16 5.5z" fill="#3b4d86"/></svg>
<div class="db" style="left:2212px;top:-4px;letter-spacing:1px">GET admin/getOnlineUser</div>
<div class="dsep" style="left:2552px"></div>
<svg class="a" style="left:2564px;top:12px" width="30" height="28" viewBox="0 0 30 28"><circle cx="10" cy="17" r="6.5" fill="none" stroke="#3b4d86" stroke-width="4.5" stroke-dasharray="3.2 2"/><circle cx="10" cy="17" r="4" fill="none" stroke="#3b4d86" stroke-width="3"/><circle cx="23" cy="7" r="4.5" fill="none" stroke="#3b4d86" stroke-width="3.5" stroke-dasharray="2.5 1.6"/><circle cx="23" cy="22" r="4" fill="none" stroke="#3b4d86" stroke-width="3.5" stroke-dasharray="2.5 1.6"/></svg>
<div class="db" style="left:2601px;top:-4px;letter-spacing:0.8px">6MB</div>
<div class="dsep" style="left:2666px"></div>
<svg class="a" style="left:2677px;top:14px" width="24" height="24" viewBox="0 0 24 24"><circle cx="12" cy="12" r="9.8" fill="none" stroke="#3b4d86" stroke-width="3.2"/><path d="M12 6v6.5h5" fill="none" stroke="#3b4d86" stroke-width="2.8" stroke-linecap="round"/></svg>
<div class="db" style="left:2710px;top:-4px;letter-spacing:1.3px">89.67ms</div>
<div class="dsep" style="left:2832px"></div>
<svg class="a" style="left:2844px;top:15px" width="28" height="22" viewBox="0 0 28 22"><path d="M7 4L1.5 11 7 18M21 4l5.5 7L21 18M16.5 1l-5 20" fill="none" stroke="#3b4d86" stroke-width="2.8" stroke-linecap="round"/></svg>
<div class="db" style="left:2882px;top:-4px;letter-spacing:1px">8.3.24</div>
<div class="dsep" style="left:2974px"></div>
<div class="a" style="left:2992px;top:8px;width:412px;height:42px;border-radius:8px;background:rgba(255,255,255,0.14)"></div>
<div class="db" style="left:3004px;top:-1px;width:367px;overflow:hidden;letter-spacing:0.85px">#5 getOnlineUser (ajax) (16:4</div>
<svg class="a" style="left:3379px;top:26px" width="19" height="12" viewBox="0 0 19 12"><path d="M2 2l7.5 7.5L17 2" fill="none" stroke="#3b4d86" stroke-width="2.4" stroke-linecap="round"/></svg>
<svg class="a" style="left:3417px;top:17px" width="33" height="26" viewBox="0 0 33 26"><path d="M0 3a3 3 0 0 1 3-3h8l3 3.5h12a3 3 0 0 1 3 3V9H7L0 22z" fill="#3b4d86"/><path d="M7.5 11H33l-7 15H0.5z" fill="#3b4d86"/></svg>
<svg class="a" style="left:3489px;top:19px" width="27" height="18" viewBox="0 0 27 18"><path d="M3 15L13.5 4.5 24 15" fill="none" stroke="#3b4d86" stroke-width="5" stroke-linecap="round"/></svg>
<svg class="a" style="left:3559px;top:17px" width="23" height="23" viewBox="0 0 23 23"><path d="M3.5 3.5l16 16M19.5 3.5l-16 16" fill="none" stroke="#3b4d86" stroke-width="5.5" stroke-linecap="round"/></svg>
</div>

<div class="vg" id="vgm" style="left:0;top:0;width:3600px;height:1898px;box-shadow:inset 0 0 60px 36px rgba(66,110,230,.82),inset 0 0 220px 0 rgba(66,110,230,.22)"></div>
<div class="vg" style="left:0;bottom:0;width:3600px;height:140px;background:linear-gradient(0deg,rgba(66,110,230,0) 0px,rgba(66,110,230,0) 36px,rgba(66,110,230,.08) 56px,rgba(66,110,230,.08) 60px,rgba(66,110,230,.0) 60.5px,rgba(66,110,230,.0) 66px,rgba(66,110,230,.035) 78px,rgba(66,110,230,.03) 98px,rgba(66,110,230,0) 140px)"></div>
<div class="vg" style="right:0;top:0;width:160px;height:1898px;background:linear-gradient(270deg,rgba(66,110,230,.02) 0px,rgba(66,110,230,.04) 50px,rgba(66,110,230,.04) 90px,rgba(66,110,230,.02) 120px,rgba(66,110,230,0) 160px)"></div>
</body></html>
